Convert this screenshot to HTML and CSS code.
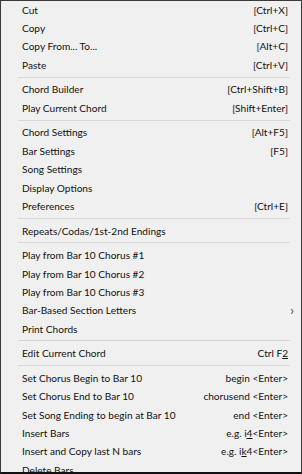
FILE: index.html
```html
<!DOCTYPE html>
<html lang="en">
<head>
    <meta charset="UTF-8">
    <title>Chord Menu</title>
    <link rel="stylesheet" href="styles.css">
</head>
<body>
    <div class="menu">
        <div class="item"><span class="label">Cut</span><span class="key">[Ctrl+X]</span></div>
        <div class="item"><span class="label">Copy</span><span class="key">[Ctrl+C]</span></div>
        <div class="item"><span class="label">Copy From... To...</span><span class="key">[Alt+C]</span></div>
        <div class="item"><span class="label">Paste</span><span class="key">[Ctrl+V]</span></div>
        <div class="sep"></div>
        <div class="item"><span class="label">Chord Builder</span><span class="key">[Ctrl+Shift+B]</span></div>
        <div class="item"><span class="label">Play Current Chord</span><span class="key">[Shift+Enter]</span></div>
        <div class="sep"></div>
        <div class="item"><span class="label">Chord Settings</span><span class="key">[Alt+F5]</span></div>
        <div class="item"><span class="label">Bar Settings</span><span class="key">[F5]</span></div>
        <div class="item"><span class="label">Song Settings</span></div>
        <div class="item"><span class="label">Display Options</span></div>
        <div class="item"><span class="label">Preferences</span><span class="key">[Ctrl+E]</span></div>
        <div class="sep"></div>
        <div class="item"><span class="label">Repeats/Codas/1st-2nd Endings</span></div>
        <div class="sep"></div>
        <div class="item"><span class="label">Play from Bar 10 Chorus #1</span></div>
        <div class="item"><span class="label">Play from Bar 10 Chorus #2</span></div>
        <div class="item"><span class="label">Play from Bar 10 Chorus #3</span></div>
        <div class="item"><span class="label">Bar-Based Section Letters</span><span class="arrow">&#8250;</span></div>
        <div class="item"><span class="label">Print Chords</span></div>
        <div class="sep"></div>
        <div class="item"><span class="label">Edit Current Chord</span><span class="key">Ctrl F<u>2</u></span></div>
        <div class="sep"></div>
        <div class="item"><span class="label">Set Chorus Begin to Bar 10</span><span class="key">begin &lt;Enter&gt;</span></div>
        <div class="item"><span class="label">Set Chorus End to Bar 10</span><span class="key">chorusend &lt;Enter&gt;</span></div>
        <div class="item"><span class="label">Set Song Ending to begin at Bar 10</span><span class="key">end &lt;Enter&gt;</span></div>
        <div class="item"><span class="label">Insert Bars</span><span class="key">e.g. i<u>4</u>&lt;Enter&gt;</span></div>
        <div class="item"><span class="label">Insert and Copy last N bars</span><span class="key">e.g. i<u>k</u>4&lt;Enter&gt;</span></div>
        <div class="item"><span class="label">Delete Bars</span></div>
    </div>
</body>
</html>
```
FILE: styles.css
```css
body {
    margin: 0;
    font-family: 'Lato', sans-serif;
    font-size: 10.1px;
    color: #111;
}
.menu {
    width: 302px;
    height: 474px;
    box-sizing: border-box;
    overflow: hidden;
    background-color: #f0f0f0;
    border: 1px solid #3a3a3a;
    border-bottom: 2px solid #111;
}
.item {
    display: flex;
    align-items: center;
    height: 18.4px;
    padding: 0 13px 0 21px;
    white-space: nowrap;
}
.item:first-child {
    margin-top: -0.5px;
}
.label {
    flex: 1;
}
.key {
    text-align: right;
}
.key u {
    text-underline-offset: 1px;
}
.arrow {
    margin-right: -6px;
    font-size: 13px;
    color: #444;
}
.sep {
    height: 1px;
    margin: 2.6px 11px 2.6px 17px;
    background-color: #d7d7d7;
}
```
